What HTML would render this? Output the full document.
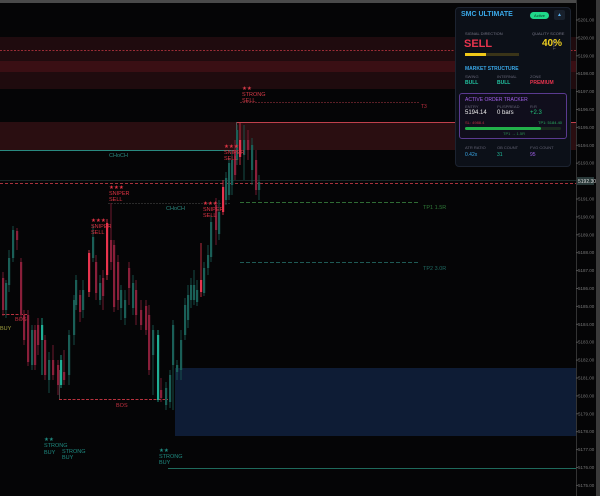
<!DOCTYPE html>
<html><head><meta charset="utf-8"><style>
html,body{margin:0;padding:0;background:#050506;overflow:hidden}
#w{position:relative;width:600px;height:496px;font-family:"Liberation Sans",sans-serif}
.p{position:absolute;white-space:nowrap}
</style></head><body><div id="w">
<svg width="600" height="496" style="position:absolute;left:0;top:0" font-family="Liberation Sans, sans-serif">
<rect x="0" y="0" width="600" height="3" fill="#4a4a4a"/>
<rect x="0" y="37" width="576" height="52" fill="#1f0b0e"/>
<rect x="0" y="61" width="576" height="11" fill="#3a0f14"/>
<line x1="0" y1="50.5" x2="576" y2="50.5" stroke="#9a2c36" stroke-width="1" stroke-dasharray="2,1.5"/>
<rect x="0" y="122" width="576" height="28" fill="#2a0e11"/>
<line x1="236" y1="122.5" x2="576" y2="122.5" stroke="#c0404c"/>
<line x1="236.5" y1="122" x2="236.5" y2="150" stroke="#555"/>
<line x1="0" y1="150.5" x2="236" y2="150.5" stroke="#2a8a80"/>
<line x1="0" y1="180.5" x2="576" y2="180.5" stroke="#1a2a28" />
<line x1="0" y1="183.5" x2="576" y2="183.5" stroke="#a8323c" stroke-dasharray="3,2"/>
<line x1="240" y1="102.5" x2="420" y2="102.5" stroke="#5a1f26" stroke-dasharray="2,1"/>
<line x1="108" y1="203.5" x2="230" y2="203.5" stroke="#2a2a2a" stroke-dasharray="2,1"/>
<line x1="240" y1="202.5" x2="420" y2="202.5" stroke="#2f6b34" stroke-dasharray="4,2"/>
<line x1="240" y1="262.5" x2="420" y2="262.5" stroke="#1f5a55" stroke-dasharray="4,2"/>
<rect x="175" y="368" width="401" height="68" fill="#0e1c35"/>
<line x1="168" y1="468.5" x2="576" y2="468.5" stroke="#1f6a5c"/>
<line x1="2" y1="314.5" x2="27" y2="314.5" stroke="#b8323e" stroke-dasharray="3,1.5"/>
<line x1="59" y1="399.5" x2="168" y2="399.5" stroke="#b8323e" stroke-dasharray="3,1.5"/>
<line x1="59.5" y1="370" x2="59.5" y2="399" stroke="#444"/>
<g id="c"></g>
<g font-size="5.5" >
<text x="242" y="90" fill="#d83a48">★★</text><text x="242" y="96" fill="#d83a48">STRONG</text><text x="242" y="102" fill="#d83a48">SELL</text>
<text x="421" y="108" fill="#c23040" font-size="5">T3</text>
<text x="109" y="157" fill="#2a8a80">CHoCH</text>
<text x="166" y="210" fill="#2a8a80">CHoCH</text>
<text x="109" y="189" fill="#e03444">★★★</text><text x="109" y="195" fill="#e03444">SNIPER</text><text x="109" y="201" fill="#e03444">SELL</text>
<text x="91" y="222" fill="#e03444">★★★</text><text x="91" y="228" fill="#e03444">SNIPER</text><text x="91" y="234" fill="#e03444">SELL</text>
<text x="203" y="205" fill="#e03444">★★★</text><text x="203" y="211" fill="#e03444">SNIPER</text><text x="203" y="217" fill="#e03444">SELL</text>
<text x="224" y="148" fill="#e03444">★★★</text><text x="224" y="154" fill="#e03444">SNIPER</text><text x="224" y="160" fill="#e03444">SELL</text>
<text x="15" y="321" fill="#c23040">BOS</text>
<text x="116" y="407" fill="#c23040">BOS</text>
<text x="0" y="330" fill="#a0a040">BUY</text>
<text x="44" y="441" fill="#1f8a80">★★</text><text x="44" y="447" fill="#1f8a80">STRONG</text><text x="44" y="454" fill="#1f8a80">BUY</text>
<text x="62" y="453" fill="#1f8a80">STRONG</text><text x="62" y="459" fill="#1f8a80">BUY</text>
<text x="159" y="452" fill="#1f8a80">★★</text><text x="159" y="458" fill="#1f8a80">STRONG</text><text x="159" y="464" fill="#1f8a80">BUY</text>
<text x="423" y="209" fill="#2f7a38">TP1 1.5R</text>
<text x="423" y="270" fill="#1f6a62">TP2 3.0R</text>
</g>
<rect x="576" y="0" width="20" height="496" fill="#050506"/>
<line x1="576.5" y1="0" x2="576.5" y2="496" stroke="#333"/>
<rect x="596" y="0" width="4" height="496" fill="#3a3a3a"/>
<g id="ax" font-size="4.5" fill="#777"></g>
<rect x="577" y="177" width="17" height="8" fill="#2a3a3a"/>
<text x="578" y="183" font-size="5" fill="#ddd">5192.30</text>
</svg>
<div class="p" style="left:455px;top:7px;width:114px;height:158px;background:#0c1018;border:1px solid #1c2330;border-radius:4px"></div>
<div class="p" style="left:461px;top:11px;font-size:7px;font-weight:bold;color:#3aa8e8">SMC ULTIMATE</div>
<div class="p" style="left:530px;top:12px;width:19px;height:7px;background:#1fd889;border-radius:4px;font-size:4px;color:#0a3a20;text-align:center;line-height:7px">Active</div>
<div class="p" style="left:554px;top:10px;width:11px;height:10px;background:#18202c;border-radius:2px;font-size:5px;color:#5ab0f0;text-align:center;line-height:10px">▲</div>
<div class="p" style="left:465px;top:31px;font-size:4px;color:#778">SIGNAL DIRECTION</div>
<div class="p" style="left:532px;top:31px;font-size:4px;color:#778">QUALITY SCORE</div>
<div class="p" style="left:464px;top:38px;font-size:11px;font-weight:bold;color:#e8344e">SELL</div>
<div class="p" style="left:542px;top:38px;font-size:10px;font-weight:bold;color:#f0d020">40%</div>
<div class="p" style="left:465px;top:53px;width:54px;height:3px;background:#3a3418"></div>
<div class="p" style="left:465px;top:53px;width:21px;height:3px;background:#f0c818"></div>
<div class="p" style="left:465px;top:66px;font-size:5px;font-weight:bold;color:#3aa8e8">MARKET STRUCTURE</div>
<div class="p" style="left:465px;top:74px;font-size:4px;color:#667">SWING</div>
<div class="p" style="left:497px;top:74px;font-size:4px;color:#667">INTERNAL</div>
<div class="p" style="left:530px;top:74px;font-size:4px;color:#667">ZONE</div>
<div class="p" style="left:465px;top:80px;font-size:5px;font-weight:bold;color:#22c2a0">BULL</div>
<div class="p" style="left:497px;top:80px;font-size:5px;font-weight:bold;color:#22c2a0">BULL</div>
<div class="p" style="left:530px;top:80px;font-size:5px;font-weight:bold;color:#e8344e">PREMIUM</div>
<div class="p" style="left:459px;top:93px;width:106px;height:44px;border:1px solid #5a3a90;border-radius:3px;background:#100e1c"></div>
<div class="p" style="left:465px;top:97px;font-size:5px;color:#a060e8">ACTIVE ORDER TRACKER</div>
<div class="p" style="left:465px;top:104px;font-size:4px;color:#667">ENTRY</div>
<div class="p" style="left:497px;top:104px;font-size:4px;color:#667">PL/SPREAD</div>
<div class="p" style="left:530px;top:104px;font-size:4px;color:#667">R:R</div>
<div class="p" style="left:465px;top:110px;font-size:6px;color:#eee">5194.14</div>
<div class="p" style="left:497px;top:110px;font-size:6px;color:#eee">0 bars</div>
<div class="p" style="left:530px;top:110px;font-size:6px;color:#22c27a">+2.3</div>
<div class="p" style="left:465px;top:120px;font-size:4px;color:#c03040">SL: 4988.4</div>
<div class="p" style="left:538px;top:120px;font-size:4px;color:#2ab060">TP1: 5184.40</div>
<div class="p" style="left:465px;top:127px;width:96px;height:3px;background:#1a2a20;border-radius:2px"></div>
<div class="p" style="left:465px;top:127px;width:76px;height:3px;background:#22b04a;border-radius:2px"></div>
<div class="p" style="left:503px;top:131px;font-size:4px;color:#2a9050">TP1 → 1.5R</div>
<div class="p" style="left:465px;top:145px;font-size:4px;color:#667">ATR RATIO</div>
<div class="p" style="left:497px;top:145px;font-size:4px;color:#667">OB COUNT</div>
<div class="p" style="left:530px;top:145px;font-size:4px;color:#667">FVG COUNT</div>
<div class="p" style="left:465px;top:152px;font-size:5px;color:#3aa8e8">0.42x</div>
<div class="p" style="left:497px;top:152px;font-size:5px;color:#22c2a0">31</div>
<div class="p" style="left:530px;top:152px;font-size:5px;color:#a060e8">95</div>
<div class="p" style="left:552px;top:40px;font-size:4px;color:#778;writing-mode:vertical-rl">BULL</div>
</div>
<script>
var C={r:"#e8344e",m:"#8a1f3a",t:"#1fae95",d:"#1a5f57"};
var k=[[2,278,310,272,316,'m'],[5,283,310,280,318,'d'],[8,258,285,250,292,'d'],[12,230,258,226,262,'d'],[16,231,240,228,250,'m'],[20,262,315,258,320,'m'],[23,315,340,310,345,'m'],[27,315,362,310,366,'m'],[31,330,365,325,370,'d'],[34,330,365,325,370,'m'],[37,325,345,318,355,'m'],[41,325,340,318,375,'t'],[44,340,375,335,380,'m'],[48,360,380,352,393,'d'],[52,360,375,345,380,'m'],[57,365,385,360,395,'m'],[60,360,385,355,388,'t'],[63,372,380,350,385,'m'],[68,335,375,330,385,'d'],[73,300,335,295,345,'d'],[75,280,305,275,310,'d'],[79,295,312,290,322,'m'],[82,290,310,280,318,'d'],[88,253,292,250,297,'r'],[92,237,258,225,262,'d'],[95,262,293,255,300,'m'],[99,283,300,275,305,'d'],[102,278,296,270,310,'m'],[106,223,275,219,280,'r'],[110,240,262,203,270,'m'],[113,245,307,240,312,'m'],[117,262,300,255,310,'m'],[120,290,308,285,320,'d'],[124,300,318,290,325,'d'],[128,268,288,262,305,'m'],[132,283,308,275,315,'d'],[135,290,315,280,325,'m'],[140,310,325,300,330,'m'],[145,306,330,300,335,'m'],[148,315,370,305,375,'m'],[152,330,355,325,395,'d'],[157,335,400,330,402,'t'],[160,390,398,378,402,'m'],[165,388,405,382,410,'d'],[169,375,402,370,408,'d'],[172,325,365,320,410,'d'],[176,365,372,360,380,'d'],[180,340,370,330,380,'d'],[184,305,335,298,340,'d'],[187,295,320,285,328,'d'],[190,285,300,278,308,'d'],[193,285,300,270,305,'d'],[196,290,302,280,306,'d'],[200,280,292,243,297,'r'],[203,268,293,262,296,'d'],[207,255,268,245,275,'d'],[210,222,257,215,262,'d'],[215,205,230,198,245,'m'],[218,212,234,200,240,'d'],[222,187,212,180,215,'r'],[225,178,200,172,205,'d'],[228,163,195,158,200,'d'],[231,160,185,150,195,'d'],[234,150,175,140,180,'m'],[236,130,160,125,165,'d'],[239,140,157,123,165,'r'],[243,140,155,125,180,'d'],[247,140,150,130,160,'m'],[251,145,170,138,185,'d'],[255,160,190,150,195,'m'],[258,182,190,175,200,'d']];
var g=document.getElementById('c'),s='';
k.forEach(function(a){var c=C[a[5]];s+='<line x1="'+(a[0]+1)+'" y1="'+a[3]+'" x2="'+(a[0]+1)+'" y2="'+a[4]+'" stroke="'+c+'" stroke-width="0.8"/><rect x="'+a[0]+'" y="'+a[1]+'" width="2.2" height="'+Math.max(1,a[2]-a[1])+'" fill="'+c+'"/>';});
g.innerHTML=s;
var ax=document.getElementById('ax'),t='';
for(var i=0;i<27;i++){var y=20+i*17.9;if(Math.abs(y-181)<5)continue;t+='<text x="578" y="'+(y+1.5)+'">'+(5201-i).toFixed(2)+'</text><line x1="576" y1="'+y+'" x2="578" y2="'+y+'" stroke="#555"/>';}
ax.innerHTML=t;
</script>
</body></html>
